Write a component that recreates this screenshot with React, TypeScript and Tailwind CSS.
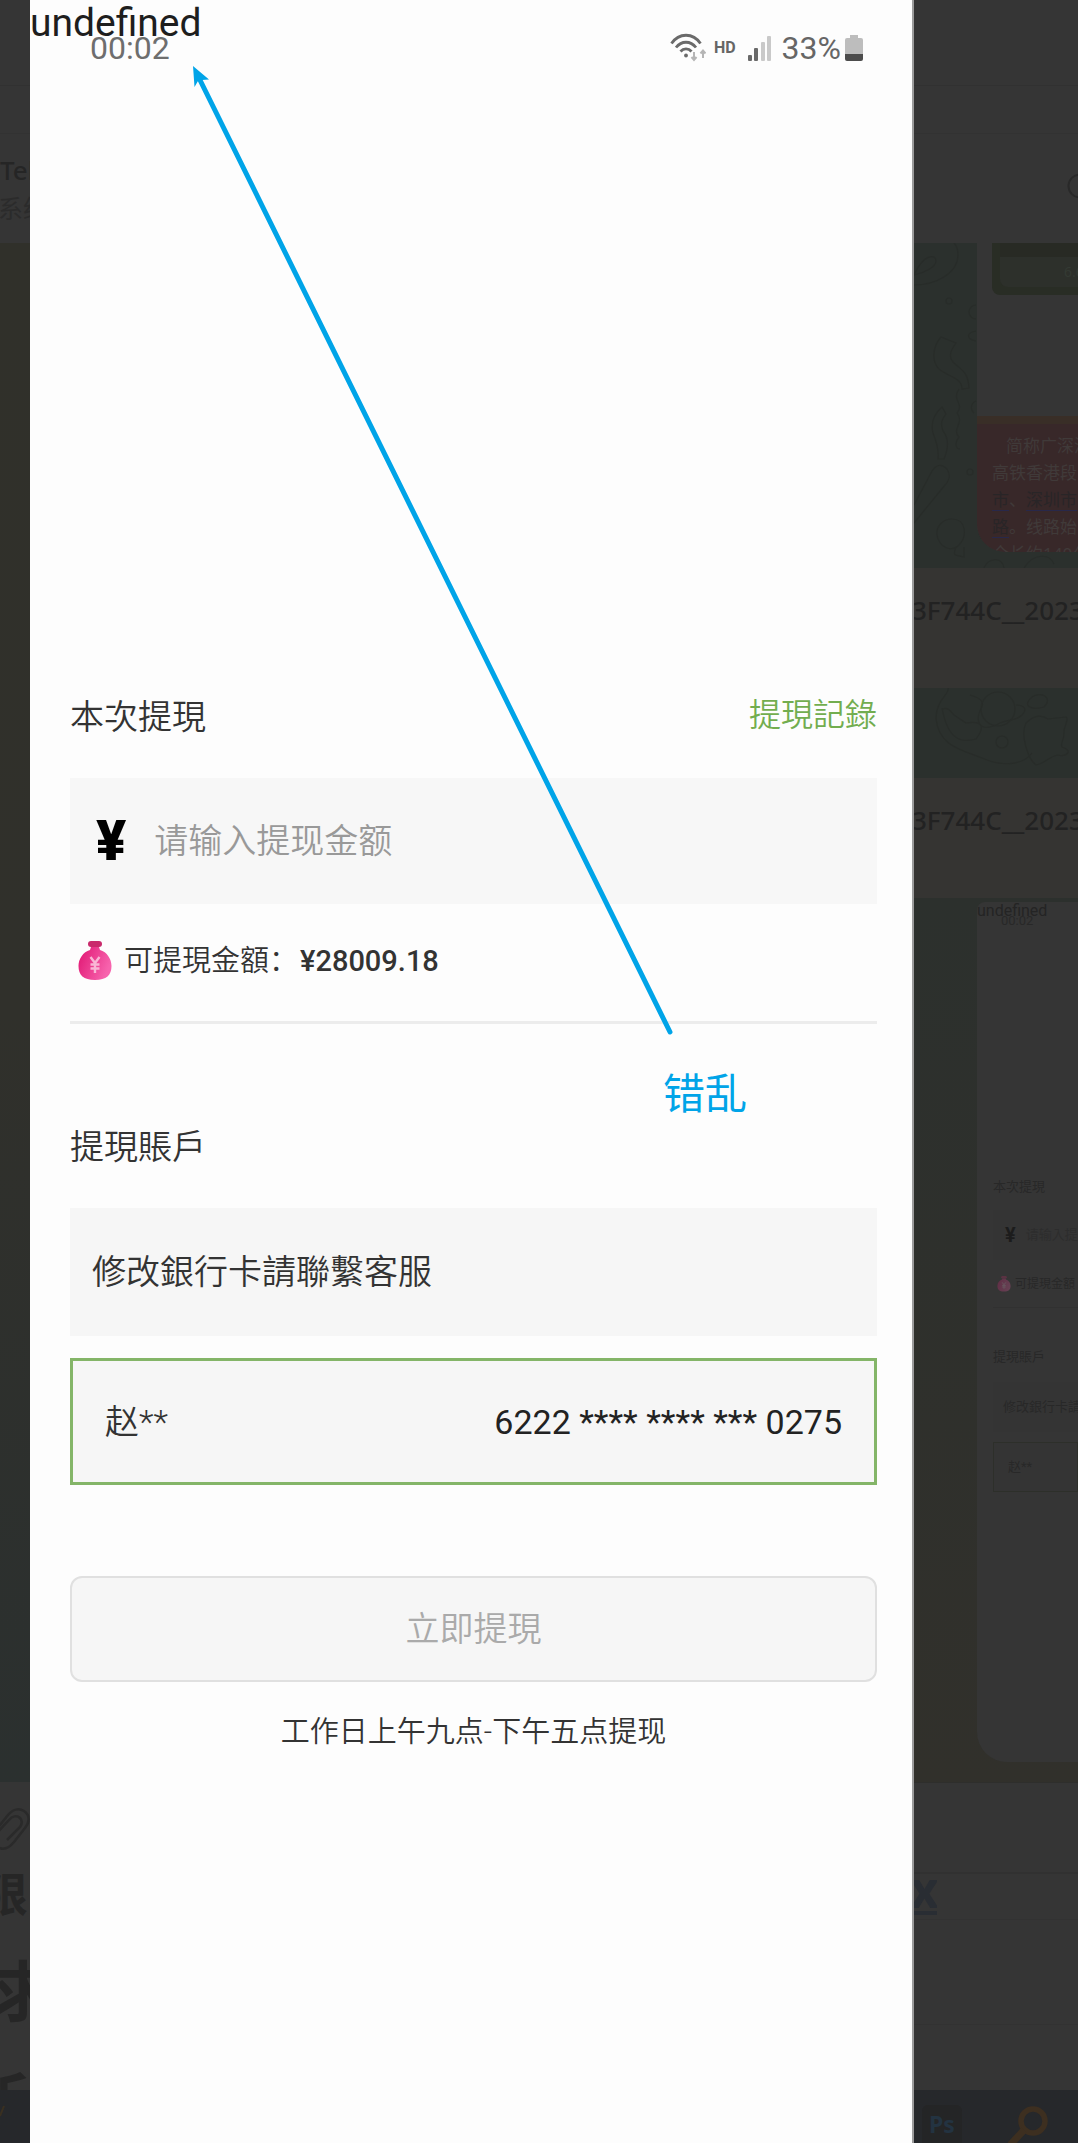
import React from "react";

const cjk = "font-['Roboto','Noto_Sans_CJK_SC',sans-serif]";
const cjkTc = "font-['Roboto','Noto_Sans_CJK_TC',sans-serif]";

function MoneyBag({ className }: { className: string }) {
  return (
    <svg viewBox="0 0 34 40" className={className} aria-hidden="true">
      <defs>
        <linearGradient id="bag" x1="0" y1="0" x2="1" y2="0.4">
          <stop offset="0" stopColor="#e01572" />
          <stop offset="1" stopColor="#f763ad" />
        </linearGradient>
      </defs>
      <rect x="10" y="0" width="14" height="6" rx="3" fill="#c92a6c" />
      <path d="M13 6h8l1 3C29 11 33.500 18 33.500 25c0 9-5 14-16.500 14S.5 34 .5 25C.5 18 5 11 12 9Z" fill="url(#bag)" />
      <path d="M12.500 16l4.500 6 4.500-6M17 22V32M12.500 23.500h9M12.500 27.500h9" fill="none" stroke="#f9b6d5" strokeWidth="2.400" />
    </svg>
  );
}

function StatusIcons() {
  return (
    <div className="flex items-center text-[#666]">
      <svg viewBox="0 0 36 30" className="h-[30px] w-9" fill="none" stroke="#6a6a6a" strokeWidth="2.800" aria-hidden="true">
        <path d="M1.500 10.500C9-.5 23-.5 30.500 10.500" />
        <path d="M6 14.500c5.500-7 14.500-7 20 0" />
        <path d="M10.500 18.500c3-3.500 8-3.500 11 0" />
        <circle cx="16" cy="22.500" r="1.900" fill="#6a6a6a" stroke="none" />
        <path d="M24 19v7M21.500 24l2.500 3 2.500-3M33 25v-7M30.500 20.500l2.500-3 2.500 3" stroke="#b5b5b5" strokeWidth="2" />
      </svg>
      <span className="ml-2 text-base leading-6 font-bold">HD</span>
      <svg viewBox="0 0 24 26" className="ml-3 h-[26px] w-6" aria-hidden="true">
        <rect x="0" y="20" width="4" height="6" rx="1" fill="#6a6a6a" />
        <rect x="6" y="13" width="4" height="13" rx="1" fill="#6a6a6a" />
        <rect x="13" y="7" width="4" height="19" rx="1" fill="#c9c9c9" />
        <rect x="19" y="1" width="4" height="25" rx="1" fill="#c9c9c9" />
      </svg>
      <span className="ml-2.5 text-[32px] leading-[38px]">33%</span>
      <svg viewBox="0 0 18 28" className="ml-1 h-7 w-[18px]" aria-hidden="true">
        <path d="M5 1h8v3h3a2 2 0 0 1 2 2v15H0V6a2 2 0 0 1 2-2h3Z" fill="#bdbdbd" />
        <path d="M0 20h18v5a2 2 0 0 1-2 2H2a2 2 0 0 1-2-2Z" fill="#4c4c4c" />
      </svg>
    </div>
  );
}

function LeftStrip() {
  return (
    <aside className="flex w-[30px] shrink-0 flex-col overflow-hidden bg-[#353535] font-['Noto_Sans','Noto_Sans_CJK_SC',sans-serif] whitespace-nowrap">
      <div className="h-[86px] shrink-0 border-b border-[#313131]" />
      <div className="h-12 shrink-0 border-b border-[#323232]" />
      <div className="h-[109px] shrink-0 pt-4">
        <div className="text-[26px] leading-10 font-medium text-[#252525]">Telegram</div>
        <div className="-ml-0.5 text-[25px] leading-9 text-[#2b2b2b]">系统</div>
      </div>
      <div className="h-[1539px] shrink-0 bg-linear-to-b from-[#30302a] via-[#30302b] to-[#2b302f]" />
      <div className="flex flex-1 flex-col overflow-hidden">
        <svg viewBox="0 0 30 60" className="mt-5 h-[60px] w-[30px] shrink-0" fill="none" stroke="#2a2a2a" strokeWidth="2.500" aria-hidden="true">
          <path d="M-4 32 8 17c5-6 11-7 16-4 6 4 6 11 1 17L14 44c-5 6-10 9-16 5-5-3-5-8-2-13L9 22c3-4 8-5 11-2 3 3 2 6 0 9L7 42" transform="translate(0 -4)" />
        </svg>
        <div className="-ml-[18px] h-[60px] shrink-0 text-[46px] leading-[62px] font-bold text-[#262626]">限时</div>
        <div className="mt-6 -ml-2.5 h-24 shrink-0 text-[66px] leading-[88px] font-bold text-[#262626]">求</div>
        <div className="mt-4 -ml-9 h-8 shrink-0 overflow-hidden text-[66px] leading-[88px] font-bold text-[#262626]">新</div>
      </div>
      <div className="h-[53px] shrink-0 bg-[#26282b]">
        <svg viewBox="0 0 30 53" className="h-[53px] w-[30px]" aria-hidden="true">
          <path d="M0 26 4 16" stroke="#3a3020" strokeWidth="2" />
        </svg>
      </div>
    </aside>
  );
}

function ChatDoodles({ className }: { className: string }) {
  return (
    <svg viewBox="0 0 164 325" className={className} fill="none" stroke="#282c29" strokeWidth="1.200" aria-hidden="true">
      <path d="M0 42c22 0 44-12 44-30 0-6-2-10-4-12M0 32c10-2 22-8 22-14 0-7-12-8-22 14" />
      <circle cx="35" cy="58" r="3" />
      <path d="M62 62a7 7 0 0 0 0 14M62 88c-10 2-10 8 0 10M27 94c-8 9-10 24-2 32 9 8 23 8 23 20l7-1c-1-17-8-18-16-26-5-6-2-12 3-19ZM45 146c-8 12 6 14-2 24 8 10-6 16 2 24-5 6-3 12 1 12M28 164c-10 9-11 18-9 26 4 10 6 18 5 26l6 0c5-12 4-22-1-28-3-8-1-12 3-17ZM0 262l18-34c4-6 9-8 15-2 4 6 2 12-2 16L0 280M62 158a7 7 0 0 0-2 12" />
      <path d="M38 276c-10 0-16 8-15 16 2 12 14 18 22 10 8-8 8-26-7-26ZM42 304c-4 10 0 8 8 10l0-10M70 325c4-10 18-12 20 0M110 325c10-16 26-14 30-4" />
      <circle cx="56" cy="229" r="3" />
    </svg>
  );
}

function FileBand() {
  return (
    <div className="h-[120px] shrink-0 bg-[#353432] pt-6">
      <div className="-ml-0.5 text-[26px] leading-9 font-medium text-[#222]">3F744C__2023</div>
    </div>
  );
}

function MiniScreen() {
  return (
    <div className={`ml-[63px] h-[860px] shrink-0 overflow-hidden rounded-tl-lg rounded-bl-[30px] bg-[#353535] text-[#282828] ${cjkTc}`}>
      <div className="relative h-6">
        <span className="absolute top-0 left-0 text-base leading-[18px] text-[#242424]">undefined</span>
        <span className="absolute top-2.5 left-6 text-[13px] leading-[18px]">00:02</span>
      </div>
      <div className="mt-[248px] ml-4 text-[13px]">
        <div className="h-[26px] leading-[26px]">本次提現</div>
        <div className="mt-2.5 flex h-[50px] items-center bg-[#343434] pl-3 text-[#2d2d2d]">
          <b className="text-xl text-[#1c1c1c]">¥</b>
          <span className="ml-2.5">请输入提现金额</span>
        </div>
        <div className="flex h-12 items-center border-b border-[#313131] text-xs">
          <div className="mr-1 ml-1 opacity-25">
            <MoneyBag className="h-4 w-3.5" />
          </div>
          可提現金額：
        </div>
        <div className="mt-9 h-[26px] leading-[26px]">提現賬戶</div>
        <div className="mt-3 flex h-[50px] items-center bg-[#343434] pl-2.5">修改銀行卡請聯繫客服</div>
        <div className="mt-2.5 flex h-[50px] items-center border border-[#2d2f2a] bg-[#343434] pl-3.5">赵**</div>
      </div>
    </div>
  );
}

function RightStrip() {
  return (
    <aside className="flex w-[164px] shrink-0 flex-col overflow-hidden bg-[#353535] font-['Noto_Sans','Noto_Sans_CJK_SC',sans-serif] whitespace-nowrap">
      <div className="h-[86px] shrink-0 border-b border-[#313131]" />
      <div className="h-12 shrink-0 border-b border-[#323232]" />
      <div className="flex h-[109px] shrink-0 justify-end pt-9">
        <svg viewBox="0 0 11 32" className="h-8 w-[11px]" aria-hidden="true">
          <circle cx="13" cy="16" r="11.500" fill="none" stroke="#292929" strokeWidth="2" />
        </svg>
      </div>
      <div className="relative h-[325px] shrink-0 bg-[#2b302d]">
        <ChatDoodles className="absolute inset-0 h-[325px] w-[164px]" />
        <div className="relative ml-[63px] h-[309px] overflow-hidden rounded-bl-[28px] bg-[#353535]">
          <div className="ml-[15px] h-[52px] rounded-bl-lg bg-[#292d25] pl-2">
            <div className="h-3.5 bg-[#282a24]" />
            <div className="h-[30px] rounded-bl-lg bg-[#2d302b] pl-16 text-sm leading-[30px] text-[#343a33]">6.6</div>
          </div>
          <div className="mt-[121px] h-2 bg-[#392e27]" />
          <div className="h-32 bg-[#382829] pt-2 pl-[15px] text-[17px] leading-[27px] text-[#403a39]">
            <div className="pl-3.5">简称广深港</div>
            <div>高铁香港段</div>
            <div><a href="#city" className="text-[#292527] underline decoration-[#28284a] underline-offset-4">市</a>、<a href="#shenzhen" className="text-[#292527] underline decoration-[#28284a] underline-offset-4">深圳市</a></div>
            <div><a href="#road" className="text-[#292527] underline decoration-[#28284a] underline-offset-4">路</a>。线路始</div>
            <div>全长约140公</div>
          </div>
        </div>
      </div>
      <FileBand />
      <div className="h-[90px] shrink-0 overflow-hidden bg-[#2b302d]">
        <svg viewBox="0 0 164 90" className="h-[90px] w-[164px]" fill="none" stroke="#282c29" strokeWidth="1.200" aria-hidden="true">
          <path d="M34 0c2 6-12 12-12 30 2 28 26 32 46 40 22 10 42 6 50-5M56 7c10 3 14 6 12 12-8 12-4 28 18 16 10-4 16-2 22-8 6-6 2-10-6-10M28 22c4-4 8 0 12 5l12 8c12-2 22 0 10 16-14 4-28 2-34-31M118 9c8-6 22 0 12 10-14 4-22-2-12-10ZM112 35c8-8 16-8 22-4l18-2c4 2-3 10-2 16 0 8-4 10-2 14 12 4 4 10-4 8-10 2-14 9-22 10-8-6-16-30-10-42Z" />
          <circle cx="84" cy="21" r="17" />
          <circle cx="88" cy="54" r="6" />
        </svg>
      </div>
      <FileBand />
      <div className="h-[884px] shrink-0 bg-linear-to-b from-[#2c302d] to-[#31302b] pt-1">
        <MiniScreen />
      </div>
      <div className="h-[92px] shrink-0 border-t border-b-2 border-t-[#2e2e2c] border-b-[#313131]" />
      <div className="h-[46px] shrink-0 border-b border-[#323232]">
        <a href="#link" className="-ml-1 block h-[41px] w-[27px] overflow-hidden border-b-4 border-[#292d33] text-[50px] leading-[30px] font-bold text-[#292d33]">
          x
        </a>
      </div>
      <div className="h-[105px] shrink-0 border-b border-[#323232]" />
      <div className="flex-1" />
      <div className="flex h-[53px] shrink-0 bg-[#26282b] pt-[15px] pl-2">
        <div className="h-[38px] w-10 rounded-t-md bg-[#242526] text-center text-[23px] leading-[38px] font-bold text-[#233341]">Ps</div>
        <svg viewBox="0 0 44 38" className="ml-[46px] h-[38px] w-11" fill="none" stroke="#3d2f20" aria-hidden="true">
          <circle cx="25" cy="16" r="12" strokeWidth="5.500" />
          <path d="M16 25 2 40" strokeWidth="7" />
        </svg>
      </div>
    </aside>
  );
}

export default function App() {
  return (
    <div className="flex min-h-screen bg-[#353535]">
      <LeftStrip />
      <main className={`relative flex min-w-0 flex-1 flex-col border-r-2 border-[#9c9c9c] bg-[#fdfdfd] pr-[35px] pl-10 text-[34px] leading-[50px] font-[350] text-[#333] ${cjkTc}`}>
        <span className="absolute top-0 left-0 text-[39px] leading-[46px] font-normal text-[#1e1e1e]">undefined</span>
        <header className="mt-7 flex h-10 items-center justify-between pr-3.5 pl-5 leading-[38px] font-normal">
          <time className="text-[32px] text-[#6e6e6e]">00:02</time>
          <StatusIcons />
        </header>

        <section className="mt-[624px]">
          <div className="flex items-start justify-between">
            <label htmlFor="amount">本次提現</label>
            <a href="#records" className="text-[32px] leading-[46px] text-[#72ad4f]">提現記錄</a>
          </div>
          <div className="mt-9 flex h-[126px] items-center bg-[#f7f7f7] px-[26px]">
            <span className="text-[56px] font-black text-black">¥</span>
            <input
              id="amount"
              type="text"
              placeholder="请输入提现金额"
              className={`ml-7 min-w-0 flex-1 bg-transparent outline-none placeholder:text-[#999] placeholder:opacity-100 ${cjk}`}
            />
          </div>
          <div className="flex h-[120px] items-center border-b-[3px] border-[#ececec] pb-1 text-[29px]">
            <MoneyBag className="mr-3 ml-2 h-10 w-[34px]" />
            <span lang="zh-CN" className={cjk}>可提現金額：</span>
            <span className="ml-0.5 font-medium">¥28009.18</span>
          </div>
        </section>

        <section className="mt-[98px]">
          <h2>提現賬戶</h2>
          <div className="mt-9 flex h-32 items-center bg-[#f6f6f6] px-[22px]">修改銀行卡請聯繫客服</div>
          <button type="button" className="mt-[22px] flex h-[127px] w-full items-center justify-between border-[3px] border-[#84b568] bg-[#f6f6f6] px-8">
            <span className={cjk}>赵**</span>
            <span className="font-normal text-[#222]">6222 **** **** *** 0275</span>
          </button>
        </section>

        <button type="button" disabled className="mt-[91px] h-[106px] rounded-xl border-2 border-[#e0e0e0] bg-[#f6f6f6] text-[#aaa]">
          立即提現
        </button>
        <p className={`mt-[25px] text-center text-[29px] ${cjk}`}>工作日上午九点-下午五点提现</p>

        <svg viewBox="0 0 660 1040" className="pointer-events-none absolute top-0 left-0 h-[1040px] w-[660px] max-w-none" aria-hidden="true">
          <path d="M170 80 640 1032" stroke="#00a4e8" strokeWidth="5" strokeLinecap="round" />
          <path d="M163 66 179 79.500 172 80 168 81 164.500 87Z" fill="#00a4e8" />
        </svg>
        <span className={`absolute top-[1070px] left-[633px] text-[42px] leading-[50px] font-normal text-[#00a4e8] ${cjk}`}>错乱</span>
      </main>
      <RightStrip />
    </div>
  );
}
